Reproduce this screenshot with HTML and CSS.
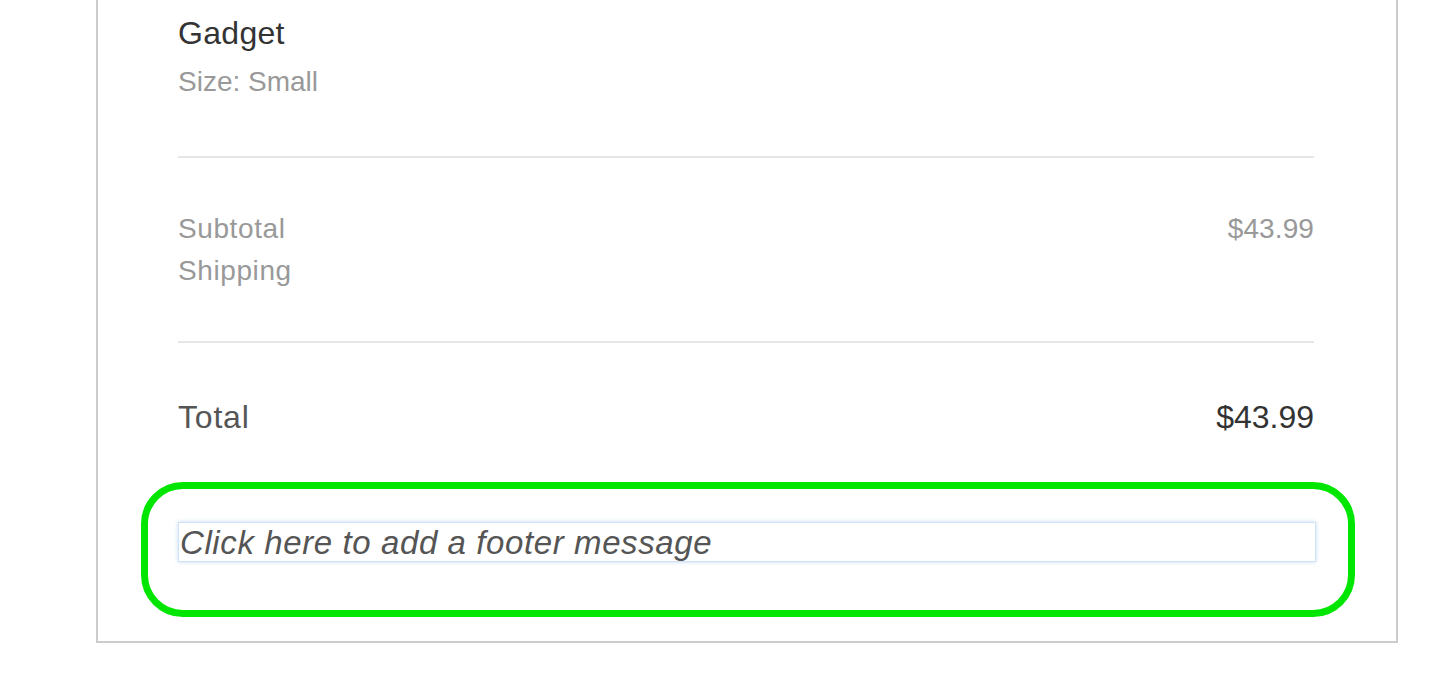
FILE: index.html
```html
<!DOCTYPE html>
<html>
<head>
<meta charset="utf-8">
<link rel="stylesheet" href="styles.css">
</head>
<body>
<div class="card">
  <div class="item">
    <div class="item-name">Gadget</div>
    <div class="item-meta">Size: Small</div>
  </div>
  <div class="summary">
    <div class="summary-labels">
      <div class="summary-label">Subtotal</div>
      <div class="summary-label">Shipping</div>
    </div>
    <div class="summary-values">
      <div class="summary-value">$43.99</div>
    </div>
  </div>
  <div class="total">
    <div class="total-label">Total</div>
    <div class="total-value">$43.99</div>
  </div>
  <div class="footer">
    <div class="footer-input">Click here to add a footer message</div>
    <div class="highlight"></div>
  </div>
</div>
</body>
</html>
```
FILE: styles.css
```css
html, body {
  margin: 0;
  padding: 0;
  background: #ffffff;
}
body {
  font-family: "Liberation Sans", Arial, Helvetica, sans-serif;
  width: 1448px;
  height: 696px;
  overflow: hidden;
}
.card {
  margin-left: 96px;
  width: 1136px;
  border: 2px solid #cccccc;
  border-top: none;
  padding: 13px 82px 79px 80px;
  box-sizing: content-box;
}
.item {
  padding-bottom: 54px;
  border-bottom: 2px solid #e6e6e6;
}
.item-name {
  font-size: 32px;
  line-height: 40px;
  letter-spacing: 0.3px;
  color: #333333;
}
.item-meta {
  margin-top: 9px;
  font-size: 28px;
  line-height: 40px;
  letter-spacing: 0;
  color: #999999;
}
.summary {
  display: flex;
  justify-content: space-between;
  padding-top: 50px;
  padding-bottom: 49px;
  border-bottom: 2px solid #e6e6e6;
}
.summary-label,
.summary-value {
  font-size: 28px;
  line-height: 42px;
  letter-spacing: 0.6px;
  color: #999999;
}
.summary-value {
  letter-spacing: 0.1px;
}
.total {
  display: flex;
  justify-content: space-between;
  padding-top: 54px;
}
.total-label {
  font-size: 32px;
  line-height: 40px;
  letter-spacing: 0.8px;
  color: #555555;
}
.total-value {
  font-size: 32px;
  line-height: 40px;
  color: #333333;
}
.footer {
  position: relative;
  margin-top: 85px;
  margin-right: -2px;
}
.footer-input {
  height: 38px;
  border: 1px solid #cfe3f5;
  box-shadow: 0 0 4px rgba(120, 170, 225, 0.45);
  padding-left: 1px;
  font-size: 33px;
  font-style: italic;
  line-height: 39px;
  letter-spacing: 0.6px;
  color: #555555;
  white-space: nowrap;
  overflow: visible;
}
.highlight {
  position: absolute;
  left: -37px;
  right: -39px;
  top: -40px;
  bottom: -55px;
  border: 7px solid #00e600;
  border-radius: 42px;
  pointer-events: none;
}
```
